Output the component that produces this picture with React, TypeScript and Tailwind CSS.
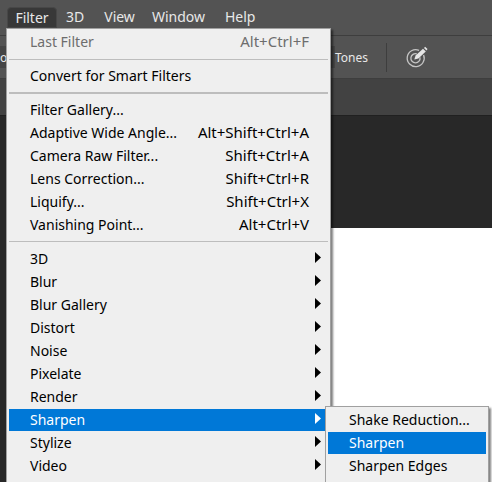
import React from "react";

type Item = { label: string; keys?: string; sub?: boolean; active?: boolean; disabled?: boolean };

const groups: Item[][] = [
  [{ label: "Last Filter", keys: "Alt+Ctrl+F", disabled: true }],
  [{ label: "Convert for Smart Filters" }],
  [
    { label: "Filter Gallery..." },
    { label: "Adaptive Wide Angle...", keys: "Alt+Shift+Ctrl+A" },
    { label: "Camera Raw Filter...", keys: "Shift+Ctrl+A" },
    { label: "Lens Correction...", keys: "Shift+Ctrl+R" },
    { label: "Liquify...", keys: "Shift+Ctrl+X" },
    { label: "Vanishing Point...", keys: "Alt+Ctrl+V" },
  ],
  [
    { label: "3D", sub: true },
    { label: "Blur", sub: true },
    { label: "Blur Gallery", sub: true },
    { label: "Distort", sub: true },
    { label: "Noise", sub: true },
    { label: "Pixelate", sub: true },
    { label: "Render", sub: true },
    { label: "Sharpen", sub: true, active: true },
    { label: "Stylize", sub: true },
    { label: "Video", sub: true },
  ],
];

const separators = ["mt-1.5 mb-[5px] h-px", "mt-[5px] mb-[5px] h-0.5", "mt-[5px] mb-1.5 h-px"];

function Arrow() {
  return (
    <svg className="mb-1 h-[11px] w-1.5 fill-current" viewBox="0 0 6 11" aria-hidden="true">
      <path d="M0 0 L6 5.5 L0 11 Z" />
    </svg>
  );
}

function MenuItem({ item }: { item: Item }) {
  const tone = item.active
    ? "bg-[#0078d7] text-white"
    : item.disabled
      ? "text-[#6d6d6d]"
      : "text-black";
  return (
    <button
      type="button"
      role="menuitem"
      disabled={item.disabled}
      className={`mb-px flex h-[22px] w-full items-center justify-between pr-[7px] pl-[21px] whitespace-nowrap ${tone}`}
    >
      <span>{item.label}</span>
      {item.keys && <span className="pr-3 text-[15px]">{item.keys}</span>}
      {item.sub && <Arrow />}
    </button>
  );
}

function TargetPen() {
  return (
    <svg className="h-[22px] w-[22px]" viewBox="0 0 22 22" fill="none" aria-hidden="true">
      <path d="M13 4.3 A8.5 8.5 0 1 0 17.6 9" stroke="#c4c4c4" strokeWidth="1.3" />
      <path d="M10.8 7.8 A4.6 4.6 0 1 0 14 11.4" stroke="#c4c4c4" strokeWidth="1.3" />
      <path d="M8.3 13.6 L9.6 9.6 L17 2.7 L19.8 5.4 L12.4 12.4 Z" fill="#e6e6e6" />
      <path d="M18 1.9 L19.1 0.8 L21.5 3.1 L20.5 4.4 Z" fill="#e6e6e6" />
    </svg>
  );
}

export default function App() {
  return (
    <div className="relative flex h-screen flex-col overflow-hidden bg-[#282828] font-['Noto_Sans','Open_Sans',sans-serif] text-sm">
      <nav className="flex h-[35px] shrink-0 items-start bg-[#535353] pt-[7px] pl-[7px] text-[#e8e8e8]">
        <button type="button" className="h-[21px] w-[50px] rounded-t-sm border border-[#474747] bg-[#383838] text-center leading-[18px]">Filter</button>
        <button type="button" className="pl-[9px] leading-5">3D</button>
        <button type="button" className="pl-5 leading-5">View</button>
        <button type="button" className="pl-[17px] leading-5">Window</button>
        <button type="button" className="pl-5 leading-5">Help</button>
      </nav>
      <div className="flex h-11 shrink-0 items-center border-y border-[#3e3e3e] bg-[#535353] text-xs text-[#e8e8e8]">
        <span className="flex h-[22px] w-[335px] items-center bg-[#454545] pt-0.5">or</span>
        <span className="pt-0.5">Tones</span>
        <span className="ml-[18px] h-[29px] w-px bg-[#3e3e3e]" />
        <button type="button" aria-label="Target settings" className="ml-[19px]">
          <TargetPen />
        </button>
      </div>
      <div className="h-9 shrink-0 bg-[#424242]" />
      <div className="h-[113px] shrink-0 border-t border-[#202020]" />
      <div className="ml-[60px] flex-1 bg-white" />

      <div
        role="menu"
        aria-label="Filter"
        className="absolute top-7 left-1.5 w-[325px] border border-[#a0a0a0] bg-[#efefef] px-0.5 pt-0.5 pb-6 shadow-[2px_2px_2px_rgba(0,0,0,0.5)]"
      >
        {groups.map((group, i) => (
          <React.Fragment key={group[0].label}>
            {group.map((item) => (
              <MenuItem key={item.label} item={item} />
            ))}
            {i < separators.length && <div role="separator" className={`bg-[#bdbdbd] ${separators[i]}`} />}
          </React.Fragment>
        ))}
      </div>

      <div
        role="menu"
        aria-label="Sharpen"
        className="absolute top-[406px] left-[325px] w-[164px] border border-[#a0a0a0] bg-[#efefef] px-0.5 pt-0.5 pb-6 shadow-[2px_2px_2px_rgba(0,0,0,0.5)]"
      >
        <MenuItem item={{ label: "Shake Reduction..." }} />
        <MenuItem item={{ label: "Sharpen", active: true }} />
        <MenuItem item={{ label: "Sharpen Edges" }} />
      </div>
    </div>
  );
}
